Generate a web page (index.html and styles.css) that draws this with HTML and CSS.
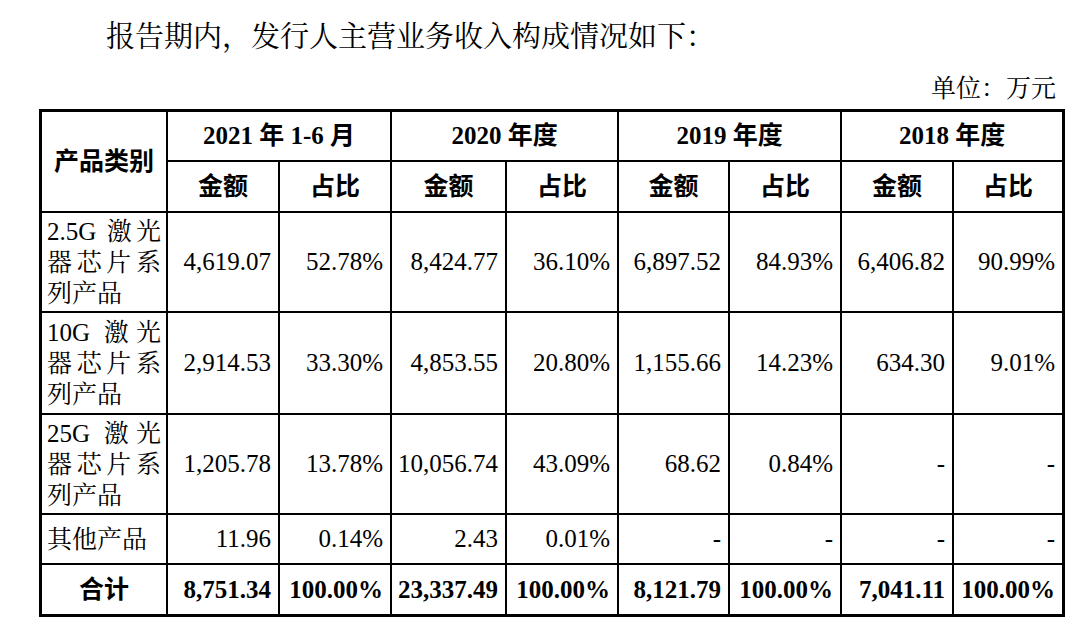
FILE: index.html
```html
<!DOCTYPE html>
<html lang="zh-CN">
<head>
<meta charset="utf-8">
<title>主营业务收入构成</title>
<link rel="stylesheet" href="styles.css">
</head>
<body>
<div class="page">
  <p class="intro">报告期内，发行人主营业务收入构成情况如下：</p>
  <p class="unit">单位：万元</p>
  <table class="rev">
    <colgroup>
      <col class="c-name">
      <col class="c-a">
      <col class="c-b">
      <col class="c-c">
      <col class="c-d">
      <col class="c-e">
      <col class="c-f">
      <col class="c-g">
      <col class="c-h">
    </colgroup>
    <thead>
      <tr class="r-h1">
        <th rowspan="2" class="hd">产品类别</th>
        <th colspan="2" class="hd">2021 年 1-6 月</th>
        <th colspan="2" class="hd">2020 年度</th>
        <th colspan="2" class="hd">2019 年度</th>
        <th colspan="2" class="hd">2018 年度</th>
      </tr>
      <tr class="r-h2">
        <th class="hd">金额</th><th class="hd">占比</th>
        <th class="hd">金额</th><th class="hd">占比</th>
        <th class="hd">金额</th><th class="hd">占比</th>
        <th class="hd">金额</th><th class="hd">占比</th>
      </tr>
    </thead>
    <tbody>
      <tr class="r-tall">
        <td class="name">2.5G 激光器芯片系列产品</td>
        <td class="num">4,619.07</td><td class="num">52.78%</td>
        <td class="num">8,424.77</td><td class="num">36.10%</td>
        <td class="num">6,897.52</td><td class="num">84.93%</td>
        <td class="num">6,406.82</td><td class="num">90.99%</td>
      </tr>
      <tr class="r-tall2">
        <td class="name">10G 激光器芯片系列产品</td>
        <td class="num">2,914.53</td><td class="num">33.30%</td>
        <td class="num">4,853.55</td><td class="num">20.80%</td>
        <td class="num">1,155.66</td><td class="num">14.23%</td>
        <td class="num">634.30</td><td class="num">9.01%</td>
      </tr>
      <tr class="r-tall">
        <td class="name">25G 激光器芯片系列产品</td>
        <td class="num">1,205.78</td><td class="num">13.78%</td>
        <td class="num">10,056.74</td><td class="num">43.09%</td>
        <td class="num">68.62</td><td class="num">0.84%</td>
        <td class="num">-</td><td class="num">-</td>
      </tr>
      <tr class="r-other">
        <td class="name">其他产品</td>
        <td class="num">11.96</td><td class="num">0.14%</td>
        <td class="num">2.43</td><td class="num">0.01%</td>
        <td class="num">-</td><td class="num">-</td>
        <td class="num">-</td><td class="num">-</td>
      </tr>
      <tr class="r-total">
        <td class="hd">合计</td>
        <td class="num bold">8,751.34</td><td class="num bold">100.00%</td>
        <td class="num bold">23,337.49</td><td class="num bold">100.00%</td>
        <td class="num bold">8,121.79</td><td class="num bold">100.00%</td>
        <td class="num bold">7,041.11</td><td class="num bold">100.00%</td>
      </tr>
    </tbody>
  </table>
</div>
</body>
</html>
```

FILE: styles.css
```css
html, body {
  margin: 0;
  padding: 0;
  background: #ffffff;
}

body {
  color: #000000;
  font-family: "Liberation Serif", "Noto Serif CJK SC", "Noto Sans CJK SC", serif;
}

.page {
  width: 1026px;
  margin-left: 39px;
}

.intro {
  margin: 0;
  padding: 17px 0 0 67px;
  font-size: 29px;
  line-height: 40px;
  white-space: nowrap;
}

.unit {
  margin: 17px 0 0 0;
  padding-right: 9px;
  text-align: right;
  font-size: 25px;
  line-height: 30px;
}

.rev {
  margin-top: 5px;
  box-sizing: border-box;
  width: 1026px;
  table-layout: fixed;
  border-collapse: separate;
  border-spacing: 0;
  border: 3px solid #000000;
  font-size: 25px;
}

.c-name { width: 126px; }
.c-a { width: 112px; }
.c-b { width: 112px; }
.c-c { width: 115px; }
.c-d { width: 112px; }
.c-e { width: 111px; }
.c-f { width: 112px; }
.c-g { width: 112px; }
.c-h { width: 108px; }

.rev th,
.rev td {
  box-sizing: border-box;
  padding: 0;
  border-right: 2px solid #000000;
  border-bottom: 2px solid #000000;
  vertical-align: middle;
  white-space: normal;
}

.rev tr > :last-child {
  border-right: 0;
}

.rev tbody tr:last-child td {
  border-bottom: 0;
}

.r-h1 { height: 50px; }
.r-h2 { height: 51px; }
.r-tall { height: 100px; }
.r-tall2 { height: 102px; }
.r-other { height: 50px; }
.r-total { height: 49px; }

.rev .hd {
  font-weight: bold;
  text-align: center;
  font-family: "Liberation Serif", "Noto Sans CJK SC", sans-serif;
  line-height: 30px;
}

.rev .name {
  padding: 0 5px 0 5px;
  text-align: justify;
  line-height: 31px;
}

.rev .num {
  padding-right: 7px;
  text-align: right;
  line-height: 30px;
  white-space: nowrap;
}

.rev .bold {
  font-weight: bold;
}
```
